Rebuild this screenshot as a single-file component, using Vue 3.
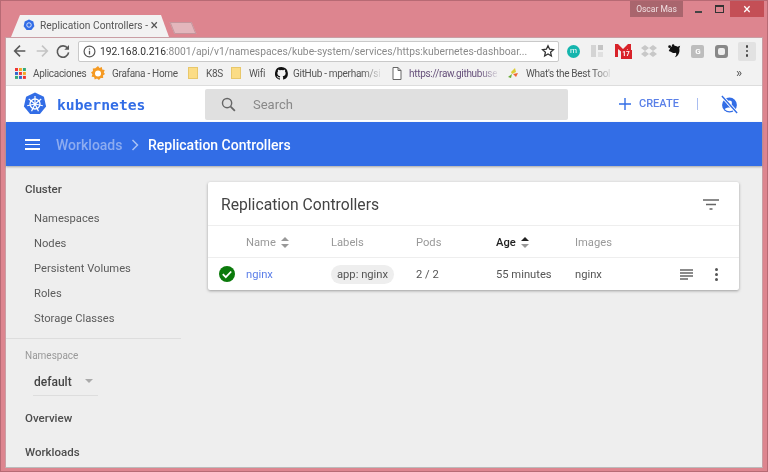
<script setup>
const navItems = ['Namespaces', 'Nodes', 'Persistent Volumes', 'Roles', 'Storage Classes']
const spokes = [0, 51.4, 102.8, 154.3, 205.7, 257.1, 308.6]
</script>

<template>
  <div class="window">
    <div class="titlebar">
      <div class="tab">
        <svg class="fav" viewBox="0 0 24 24" width="12" height="12">
          <path d="M12 1l8.6 4.2 2.1 9.3-5.9 7.5H7.2l-5.9-7.5 2.1-9.3z" fill="#326de6" />
          <circle cx="12" cy="12" r="4.5" fill="none" stroke="#fff" stroke-width="1.5" />
        </svg>
        <span class="tab-title">Replication Controllers -</span>
        <span class="tab-x">×</span>
      </div>
      <div class="newtab"></div>
      <div class="controls">
        <span class="user">Oscar Mas</span>
        <span class="ctl"><i class="min"></i></span>
        <span class="ctl"><i class="max"></i></span>
        <span class="ctl close">×</span>
      </div>
    </div>

    <div class="browser">
      <div class="toolbar">
        <svg class="nav-ic" viewBox="0 0 24 24" width="16" height="16"><path d="M20 12H5M12 4l-8 8 8 8" fill="none" stroke="#5a5a5a" stroke-width="2.4" /></svg>
        <svg class="nav-ic" viewBox="0 0 24 24" width="16" height="16"><path d="M4 12h15M12 4l8 8-8 8" fill="none" stroke="#c4c4c4" stroke-width="2.4" /></svg>
        <svg class="nav-ic" viewBox="0 0 24 24" width="16" height="16"><path d="M19 8a8.5 8.5 0 1 0 1.4 6" fill="none" stroke="#5a5a5a" stroke-width="2.4" /><path d="M21 3v7h-7z" fill="#5a5a5a" /></svg>
        <div class="omnibox">
          <svg class="no-shrink" viewBox="0 0 24 24" width="13" height="13"><circle cx="12" cy="12" r="10" fill="none" stroke="#555" stroke-width="2.2" /><path d="M12 10.5v7M12 6.5v2" stroke="#555" stroke-width="2.4" /></svg>
          <span class="url"><b>192.168.0.216</b>:8001/api/v1/namespaces/kube-system/services/https:kubernetes-dashboar...</span>
          <svg class="no-shrink" viewBox="0 0 24 24" width="14" height="14"><path d="M12 3l2.8 6 6.5.7-4.9 4.4 1.4 6.5L12 17.2l-5.8 3.4 1.4-6.5-4.9-4.4 6.5-.7z" fill="none" stroke="#333" stroke-width="2.2" /></svg>
        </div>
        <div class="exts">
          <span class="ext m">m</span>
          <svg viewBox="0 0 14 14" width="14" height="14"><rect x="1" y="1" width="5" height="12" fill="#d4d4d4" /><rect x="8" y="1" width="5" height="5" fill="#c4c4c4" /><rect x="8" y="8" width="5" height="5" fill="#e0e0e0" /></svg>
          <span class="gmail">
            <svg viewBox="0 0 16 13" width="16" height="13"><path d="M0 0h3l5 5 5-5h3v13h-3V5L8 9 3 5v8H0z" fill="#d8232a" /></svg>
            <em>17</em>
          </span>
          <svg viewBox="0 0 16 14" width="16" height="14"><path d="M4 1l4 3-4 3-4-3zM12 1l4 3-4 3-4-3zM4 7l4 3-4 3-4-3zM12 7l4 3-4 3-4-3z" fill="#c8c8c8" /></svg>
          <svg viewBox="0 0 16 16" width="14" height="14"><path d="M3 6c1-4 6-5 9-3l3-1-1 3c1 4-1 9-5 10 2-2 2-4 1-5-2 1-4 0-5-1L2 8z" fill="#111" /><circle cx="3" cy="3" r="1.6" fill="#111" /><circle cx="7" cy="1.6" r="1.4" fill="#111" /></svg>
          <span class="ext g">G</span>
          <span class="ext d"><i></i></span>
          <span class="menu"><i></i><i></i><i></i></span>
        </div>
      </div>

      <div class="bookmarks">
        <span class="bm first">
          <svg class="no-shrink" viewBox="0 0 10 10" width="11" height="11">
            <g v-for="r in 3" :key="r">
              <rect v-for="c in 3" :key="c" :x="(c - 1) * 3.6" :y="(r - 1) * 3.6" width="2.7" height="2.7" :fill="['#e33', '#f5a623', '#3a7', '#36c', '#e33', '#f5a623', '#3a7', '#36c', '#e33'][(r - 1) * 3 + c - 1]" />
            </g>
          </svg>
          <span class="gap7">Aplicaciones</span>
        </span>
        <span class="bm w-gr">
          <svg class="no-shrink" viewBox="0 0 14 14" width="14" height="14"><path d="M7 0l1.5 2 2.4-.9.3 2.5 2.5.4-.9 2.4L14 8l-2 1.5.2 2.5-2.5.1L8 14l-2-1.4-2.3 1-.6-2.5-2.5-.4.8-2.4L0 6.500l2-1.500-.2-2.500 2.500-.3z" fill="#f59a23" /><circle cx="7" cy="7.500" r="3" fill="#fff" /></svg>
          <span class="gap7">Grafana - Home</span>
        </span>
        <span class="bm w-k8"><i class="folder"></i><span class="gap8">K8S</span></span>
        <span class="bm w-wf"><i class="folder"></i><span class="gap8">Wifi</span></span>
        <span class="bm w-gh">
          <svg class="no-shrink" viewBox="0 0 16 16" width="13" height="13"><path d="M8 0a8 8 0 0 0-2.500 15.600c.4.1.5-.2.5-.4v-1.400c-2.200.5-2.700-1-2.700-1-.4-.9-.9-1.200-.9-1.200-.7-.5.100-.5.100-.5.800.100 1.200.8 1.200.8.700 1.200 1.900.9 2.300.7.100-.5.300-.9.500-1.100-1.800-.2-3.600-.9-3.600-4 0-.9.300-1.600.8-2.100-.1-.2-.4-1 .1-2.100 0 0 .7-.2 2.200.8a7.600 7.600 0 0 1 4 0c1.500-1 2.200-.8 2.200-.8.500 1.100.2 1.900.1 2.100.5.600.8 1.300.8 2.100 0 3.100-1.900 3.700-3.700 3.900.3.300.6.800.6 1.500v2.200c0 .2.100.5.600.4A8 8 0 0 0 8 0z" fill="#111" /></svg>
          <span class="fade gap5">GitHub - mperham/si</span>
        </span>
        <span class="bm w-doc">
          <svg class="no-shrink" viewBox="0 0 10 13" width="10" height="13"><path d="M1 .5h5l3 3v9H1zM6 .5v3h3" fill="#fff" stroke="#666" /></svg>
          <span class="fade gap7 purple">https://raw.githubuse</span>
        </span>
        <span class="bm w-best">
          <svg class="no-shrink" viewBox="0 0 12 12" width="12" height="12"><path d="M1 10l4-3-1 4z" fill="#6a3" /><path d="M4 5l4-4 1 4-4 2z" fill="#dc3" /><path d="M6 7l5-1-2 4z" fill="#e63" /></svg>
          <span class="fade gap7">What's the Best Tool</span>
        </span>
        <span class="more">»</span>
      </div>

      <div class="page">
        <header class="kube-head">
          <svg class="logo" viewBox="0 0 24 24" width="24" height="24">
            <path d="M12 .5l8.900 4.300 2.200 9.600-6.200 7.700H7.100L.9 14.400l2.200-9.600z" fill="#326de6" />
            <circle cx="12" cy="12" r="5" fill="none" stroke="#fff" stroke-width="1.300" />
            <circle cx="12" cy="12" r="1.300" fill="#fff" />
            <line v-for="a in spokes" :key="a" x1="12" y1="12" x2="12" y2="4" stroke="#fff" stroke-width="1.200" :transform="`rotate(${a} 12 12)`" />
          </svg>
          <span class="brand">kubernetes</span>
          <div class="search">
            <svg viewBox="0 0 24 24" width="17" height="17"><circle cx="10" cy="10" r="6.500" fill="none" stroke="#666" stroke-width="2" /><path d="M15 15l6 6" stroke="#666" stroke-width="2.400" /></svg>
            <span>Search</span>
          </div>
          <div class="actions">
            <svg viewBox="0 0 12 12" width="12" height="12"><path d="M6 0v12M0 6h12" stroke="#326de6" stroke-width="1.400" /></svg>
            <span class="create">CREATE</span>
            <i class="vdiv"></i>
            <svg class="noauth" viewBox="0 0 20 20" width="19" height="19">
              <circle cx="10" cy="10.500" r="7.800" fill="#326de6" />
              <circle cx="10" cy="8.500" r="2.600" fill="#fff" />
              <path d="M5 15c1-2.600 9-2.600 10 0a7 7 0 0 1-10 0z" fill="#fff" />
              <path d="M2 1l16 18" stroke="#fff" stroke-width="3.500" />
              <path d="M2 1l16 18" stroke="#326de6" stroke-width="1.500" />
            </svg>
          </div>
        </header>

        <div class="bluebar">
          <span class="burger"><i></i><i></i><i></i></span>
          <span class="crumb">Workloads</span>
          <svg viewBox="0 0 8 12" width="8" height="12"><path d="M1.500 1l5 5-5 5" fill="none" stroke="#a9c2f5" stroke-width="1.500" /></svg>
          <span class="current">Replication Controllers</span>
        </div>

        <div class="main">
          <aside class="side">
            <div class="side-head">Cluster</div>
            <div v-for="n in navItems" :key="n" class="side-item">{{ n }}</div>
            <div class="side-div"></div>
            <div class="ns-label">Namespace</div>
            <div class="ns-select"><span>default</span><i></i></div>
            <div class="side-head over">Overview</div>
            <div class="side-head work">Workloads</div>
          </aside>

          <section class="content">
            <div class="card">
              <div class="card-title">
                <span>Replication Controllers</span>
                <svg viewBox="0 0 16 11" width="16" height="11"><path d="M0 1h16M3 5.500h10M6.500 10h3" stroke="#666" stroke-width="1.500" /></svg>
              </div>
              <div class="grid head">
                <span></span>
                <span class="sort">Name
                  <svg viewBox="0 0 8 11" width="8" height="11"><path d="M4 0l4 4H0z" fill="#999" /><path d="M4 11L0 7h8z" fill="#999" /></svg>
                </span>
                <span>Labels</span>
                <span>Pods</span>
                <span class="sort on">Age
                  <svg viewBox="0 0 8 11" width="8" height="11"><path d="M4 0l4 4H0z" fill="#222" /><path d="M4 11L0 7h8z" fill="#999" /></svg>
                </span>
                <span>Images</span>
                <span></span>
              </div>
              <div class="grid row">
                <svg class="check" viewBox="0 0 16 16" width="16" height="16"><circle cx="8" cy="8" r="8" fill="#0b7a0b" /><path d="M3.800 8.200l3 3 5.400-5.700" fill="none" stroke="#fff" stroke-width="1.800" /></svg>
                <a class="link">nginx</a>
                <span><span class="chip">app: nginx</span></span>
                <span>2 / 2</span>
                <span>55 minutes</span>
                <span>nginx</span>
                <span class="row-acts">
                  <svg viewBox="0 0 13 11" width="13" height="11"><path d="M0 1h13M0 4h13M0 7h13M0 10h8" stroke="#666" stroke-width="1.300" /></svg>
                  <span class="dots"><i></i><i></i><i></i></span>
                </span>
              </div>
            </div>
          </section>
        </div>
      </div>
    </div>
  </div>
</template>

<style>
html, body { margin: 0; background: #dd858f; }
</style>

<style scoped>
* { box-sizing: border-box; }
i, em { display: block; font-style: normal; }
.no-shrink { flex: none; }
.window {
  width: 768px; height: 472px; overflow: hidden;
  background: #dd858f; border: 1px solid #b76a74;
  padding: 0 4px 3px; display: flex; flex-direction: column;
  font-family: Roboto, "Liberation Sans", sans-serif; color: #444;
  filter: blur(0.45px);
}
.titlebar { height: 36px; flex: none; display: flex; align-items: flex-end; padding-left: 6px; position: relative; }
.tab {
  width: 158px; height: 22px; background: #f2f2f2; display: flex; align-items: center;
  padding: 0 11px 2px 12px; font-size: 10.200px; color: #555;
  clip-path: polygon(0 100%, 9px 0, 150px 0, 100% 100%);
}
.fav { flex: none; }
.tab-title { margin-left: 5px; flex: 1; white-space: nowrap; }
.tab-x { font-size: 14px; color: #555; line-height: 1; }
.newtab {
  width: 22px; height: 12px; margin: 0 0 3px 3px; background: #e3b6bc; border: 1px solid #c4959c;
  transform: skewX(22deg);
}
.controls { position: absolute; right: -1px; top: 0; display: flex; height: 16px; align-items: stretch; }
.user { width: 53px; background: #a9656d; color: #f0dfe1; font-size: 8.500px; line-height: 16px; text-align: center; margin-right: 5px; }
.ctl { width: 21px; display: flex; align-items: center; justify-content: center; }
.min { width: 7px; height: 2px; background: #444; margin-top: 5px; }
.max { width: 9px; height: 8px; border: 1px solid #333; border-top-width: 2px; }
.close { width: 34px; background: #c44f56; color: #fff; font-size: 14px; line-height: 1; }
.browser { flex: 1; min-height: 0; display: flex; flex-direction: column; background: #f2f2f2; border: 1px solid #c99ea4; border-bottom-color: #bbb; }
.toolbar { height: 24px; flex: none; display: flex; align-items: center; padding-left: 6px; margin-top: 1px; }
.nav-ic { margin-right: 5.500px; flex: none; }
.omnibox {
  width: 481px; height: 21px; margin-left: 1.500px; background: #fff; border: 1px solid #c9c9c9; border-radius: 2px;
  display: flex; align-items: center; padding: 0 3px 0 4px; flex: none;
}
.url { font-size: 10.300px; color: #8a8a8a; margin-left: 4px; flex: 1; white-space: nowrap; }
.url b { font-weight: 400; color: #333; }
.exts { flex: 1; display: flex; align-items: center; justify-content: space-between; padding: 0 6px 0 8px; }
.ext { width: 13px; height: 13px; display: flex; align-items: center; justify-content: center; font-size: 8px; color: #fff; }
.ext.m { background: #14b5ad; border-radius: 50%; line-height: 1; }
.ext.g { background: #bdbdbd; border-radius: 2px; font-weight: 700; }
.ext.d { background: #888; border-radius: 3px; }
.ext.d i { width: 7px; height: 7px; background: #eee; border-radius: 2px; }
.gmail { position: relative; width: 16px; height: 14px; }
.gmail svg { display: block; }
.gmail em { position: absolute; left: 6px; top: 6px; width: 11px; height: 9px; background: #d8232a; color: #fff; font-size: 6.500px; line-height: 9px; text-align: center; font-weight: 700; }
.menu { width: 18px; height: 19px; background: #e2e2e2; border-radius: 2px; display: flex; flex-direction: column; align-items: center; justify-content: center; gap: 2px; }
.menu i { width: 2.500px; height: 2.500px; background: #444; border-radius: 50%; }
.bookmarks {
  height: 22px; flex: none; display: flex; align-items: center; position: relative;
  padding: 0 0 2px 9px; font-size: 10px; letter-spacing: -0.3px; color: #555; white-space: nowrap;
}
.bm { display: flex; align-items: center; flex: none; }
.first { width: 76px; } .w-gr { width: 97px; } .w-k8 { width: 43px; } .w-wf { width: 44px; } .w-gh { width: 117px; } .w-doc { width: 115px; } .w-best { width: 110px; }
.gap8 { margin-left: 8px; } .gap7 { margin-left: 7px; } .gap5 { margin-left: 5px; }
.folder { width: 10px; height: 12px; background: #fbdc85; border: 1px solid #e8c76a; flex: none; }
.fade { -webkit-mask-image: linear-gradient(90deg, #000 80%, rgba(0,0,0,.15)); mask-image: linear-gradient(90deg, #000 80%, rgba(0,0,0,.15)); }
.purple { color: #66507a; }
.more { position: absolute; left: 730px; top: 2px; font-size: 13px; line-height: 16px; }
.page { flex: 1; min-height: 0; display: flex; flex-direction: column; background: #eee; border-top: 1px solid #ddd; }
.kube-head { height: 36px; flex: none; background: #fff; display: flex; align-items: center; padding-left: 17px; }
.logo { flex: none; }
.brand { font: 700 14.700px "DejaVu Sans Mono", monospace; color: #326de6; margin-left: 10px; width: 148px; }
.search {
  width: 363px; height: 31px; background: #e0e0e0; border-radius: 2px; display: flex; align-items: center;
  padding-left: 15px; color: #888; font-size: 13px;
}
.search span { margin-left: 16px; }
.actions { display: flex; align-items: center; margin-left: 51px; color: #5a80e8; }
.create { font-size: 11px; font-weight: 500; margin: 0 0 2px 8px; }
.vdiv { width: 1px; height: 12px; background: #a9bdf0; margin: 0 22px 0 18px; }
.noauth { display: block; margin-top: 1px; }
.bluebar {
  height: 44px; flex: none; background: #326de6; display: flex; align-items: center; padding: 1px 0 0 19px;
  font-size: 14px; font-weight: 500; color: #fff; box-shadow: 0 1px 2px rgba(0,0,0,.3); position: relative;
}
.burger { display: flex; flex-direction: column; gap: 2.700px; width: 15px; }
.burger i { height: 1.700px; background: #fff; }
.crumb { color: #8dacf0; margin: 0 9px 0 16px; width: 66px; white-space: nowrap; }
.current { margin-left: 9px; white-space: nowrap; }
.main { flex: 1; min-height: 0; display: flex; }
.side { width: 175px; flex: none; padding: 16px 0 0 19px; font-size: 11.200px; color: #5c5c5c; position: relative; overflow: hidden; }
.side-head { font-weight: 500; font-size: 11.500px; line-height: 14px; color: #4d4d4d; }
.side-item { height: 25px; line-height: 25px; padding-left: 9px; }
.side-head + .side-item { margin-top: 10px; }
.side-div { height: 1px; background: #ddd; margin: 7px 0 11px -19px; }
.ns-label { font-size: 10px; color: #999; line-height: 12px; }
.ns-select { width: 65px; height: 27px; margin: 7px 0 0 8px; border-bottom: 1px solid #ddd; display: flex; align-items: center; justify-content: space-between; padding: 0 5px 0 1px; font-size: 12px; font-weight: 500; color: #444; }
.ns-select i { width: 0; height: 0; border: 4px solid transparent; border-top-color: #aaa; border-bottom-width: 0; margin-top: -2px; }
.over { margin-top: 15px; }
.work { margin-top: 20px; }
.content { flex: 1; padding: 16px 23px 0 27px; }
.card { background: #fff; box-shadow: 0 1px 3px rgba(0,0,0,.35); border-radius: 2px; }
.card-title { height: 44px; display: flex; align-items: center; justify-content: space-between; padding: 2px 20px 0 13px; font-size: 15.700px; color: #444; border-bottom: 1px solid #eee; }
.grid { display: grid; grid-template-columns: 38px 85px 85px 80px 79px 1fr 62px; align-items: center; font-size: 11.200px; }
.head { height: 32px; padding-top: 1px; color: #999; border-bottom: 1px solid #eee; }
.row { height: 32px; color: #555; }
.check { justify-self: center; }
.sort { display: flex; align-items: center; gap: 5px; }
.on { color: #222; font-weight: 500; }
.link { color: #5b7ee8; }
.chip { display: inline-block; height: 19px; line-height: 19px; padding: 0 6px; background: #eee; border-radius: 10px; white-space: nowrap; }
.row-acts { display: flex; align-items: center; justify-content: flex-end; padding-right: 21px; gap: 22px; }
.dots { display: flex; flex-direction: column; gap: 2px; }
.dots i { width: 3px; height: 3px; border-radius: 50%; background: #555; }
</style>
